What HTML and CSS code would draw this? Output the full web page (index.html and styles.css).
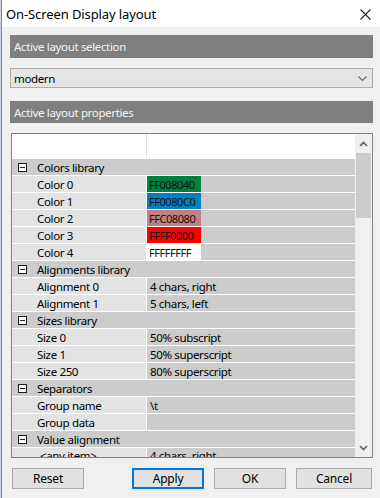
FILE: index.html
```html
<!DOCTYPE html>
<html>
<head>
<meta charset="utf-8">
<link rel="stylesheet" href="styles.css">
</head>
<body>
<div class="window">
  <div class="titlebar">
    <span class="title">On-Screen Display layout</span>
    <svg class="close" width="11" height="11" viewBox="0 0 11 11"><path d="M0.5 0.5L10.5 10.5M10.5 0.5L0.5 10.5" stroke="#222" stroke-width="1.1" fill="none"/></svg>
  </div>
  <div class="content">
    <div class="section-header">Active layout selection</div>
    <div class="select">
      <span>modern</span>
      <svg class="chev" width="9" height="5" viewBox="0 0 9 5"><path d="M0.5 0.5L4.5 4.5L8.5 0.5" stroke="#6a6a6a" stroke-width="1.1" fill="none"/></svg>
    </div>
    <div class="section-header props">Active layout properties</div>
    <div class="grid">
      <div class="rows">
        <div class="row head"><div class="name"></div><div class="value"></div></div>
        <div class="row cat"><span class="box"></span><span>Colors library</span></div>
        <div class="row"><div class="name">Color 0</div><div class="value"><span class="swatch" style="background:#008040">FF008040</span></div></div>
        <div class="row"><div class="name">Color 1</div><div class="value"><span class="swatch" style="background:#0080C0">FF0080C0</span></div></div>
        <div class="row"><div class="name">Color 2</div><div class="value"><span class="swatch" style="background:#C08080">FFC08080</span></div></div>
        <div class="row"><div class="name">Color 3</div><div class="value"><span class="swatch" style="background:#FF0000">FFFF0000</span></div></div>
        <div class="row"><div class="name">Color 4</div><div class="value"><span class="swatch" style="background:#FFFFFF">FFFFFFFF</span></div></div>
        <div class="row cat"><span class="box"></span><span>Alignments library</span></div>
        <div class="row"><div class="name">Alignment 0</div><div class="value">4 chars, right</div></div>
        <div class="row"><div class="name">Alignment 1</div><div class="value">5 chars, left</div></div>
        <div class="row cat"><span class="box"></span><span>Sizes library</span></div>
        <div class="row"><div class="name">Size 0</div><div class="value">50% subscript</div></div>
        <div class="row"><div class="name">Size 1</div><div class="value">50% superscript</div></div>
        <div class="row"><div class="name">Size 250</div><div class="value">80% superscript</div></div>
        <div class="row cat"><span class="box"></span><span>Separators</span></div>
        <div class="row"><div class="name">Group name</div><div class="value">\t</div></div>
        <div class="row"><div class="name">Group data</div><div class="value"></div></div>
        <div class="row cat"><span class="box"></span><span>Value alignment</span></div>
        <div class="row last"><div class="name any">&lt;any item&gt;</div><div class="value">4 chars, right</div></div>
      </div>
      <div class="scrollbar">
        <svg class="arrow" width="9" height="6" viewBox="0 0 9 6"><path d="M1 5L4.5 1.5L8 5" stroke="#606060" stroke-width="1.6" fill="none"/></svg>
        <div class="track"><div class="thumb"></div></div>
        <svg class="arrow" width="9" height="6" viewBox="0 0 9 6"><path d="M1 1L4.5 4.5L8 1" stroke="#606060" stroke-width="1.6" fill="none"/></svg>
      </div>
    </div>
    <div class="buttons">
      <button class="btn">Reset</button>
      <div class="spacer"></div>
      <button class="btn default">Apply</button>
      <button class="btn">OK</button>
      <button class="btn cancel">Cancel</button>
    </div>
  </div>
</div>
</body>
</html>
```
FILE: styles.css
```css
* { box-sizing: border-box; }
html, body { margin: 0; padding: 0; }
body {
  width: 380px;
  height: 498px;
  overflow: hidden;
  background: #f0f0f0;
  font-family: "Noto Sans", sans-serif;
  font-size: 11.5px;
  letter-spacing: -0.35px;
  color: #000;
}
.window {
  width: 380px;
  height: 498px;
  border-left: 1px solid #c8d4e3;
  position: relative;
}
.window::before {
  content: "";
  position: absolute;
  left: 0;
  top: 0;
  bottom: 0;
  width: 1px;
  background: #6d8bb0;
}
.titlebar {
  height: 27px;
  background: #ffffff;
  display: flex;
  align-items: center;
  justify-content: space-between;
  padding: 0 9px 0 5px;
}
.title { font-size: 13px; letter-spacing: -0.1px; color: #000; }
.close { margin-top: 1px; }
.content {
  padding: 8px 7px 0 9px;
}
.section-header {
  height: 23px;
  background: #7f7f7f;
  color: #f4f4f4;
  padding-left: 4px;
  display: flex;
  align-items: center;
}
.section-header.props { margin-top: 13px; height: 22px; }
.select {
  margin-top: 10px;
  height: 20px;
  background: #e5e5e5;
  border: 1px solid #adadad;
  display: flex;
  align-items: center;
  justify-content: space-between;
  padding: 0 5px 0 3px;
}
.grid {
  margin-top: 10px;
  margin-left: 1px;
  height: 325px;
  border: 1px solid #828282;
  display: flex;
  overflow: hidden;
  background: #ffffff;
}
.rows {
  flex: 1;
  overflow: hidden;
}
.row {
  height: 17px;
  border-bottom: 1px solid #ffffff;
  display: flex;
  align-items: stretch;
  background: #e3e3e3;
}
.row.head { height: 25px; background: #ffffff; }
.row.head .name { border-right: 1px solid #e3e3e3; }
.name {
  width: 135px;
  padding-left: 25px;
  display: flex;
  align-items: center;
  border-right: 1px solid #ffffff;
  white-space: nowrap;
}
.name.any { padding-left: 28px; }
.value {
  flex: 1;
  background: #cccccc;
  display: flex;
  align-items: center;
  padding-left: 3px;
  white-space: nowrap;
}
.row.last .name, .row.last .value { align-items: flex-start; line-height: 15px; }
.row.head .value { background: #ffffff; }
.value:has(.swatch) { padding-left: 0; }
.swatch {
  width: 54px;
  height: 16px;
  display: flex;
  align-items: center;
  padding-left: 2px;
  font-size: 11px;
  letter-spacing: -0.45px;
  color: #111;
  overflow: hidden;
}
.row.cat {
  background: #cccccc;
  align-items: center;
}
.box {
  width: 9px;
  height: 9px;
  border: 1px solid #1e1e1e;
  background: #ffffff;
  margin: 0 10px 0 6px;
  position: relative;
}
.box::after {
  content: "";
  position: absolute;
  left: 1px;
  right: 1px;
  top: 3px;
  height: 1px;
  background: #1e1e1e;
}
.scrollbar {
  width: 17px;
  background: #f0f0f0;
  display: flex;
  flex-direction: column;
  align-items: center;
}
.scrollbar .arrow { margin: 7px 0 6px; flex: none; }
.track { flex: 1; width: 100%; padding: 0 1px; }
.thumb { height: 65px; background: #cdcdcd; }
.buttons {
  margin-top: 10px;
  display: flex;
  gap: 10px;
  padding-left: 2px;
}
.spacer { width: 28px; }
.btn {
  width: 72px;
  height: 21px;
  background: #e1e1e1;
  border: 1px solid #adadad;
  font-family: inherit;
  font-size: 12px;
  letter-spacing: -0.2px;
  color: #000;
  padding: 0;
}
.btn.default { border: 2px solid #0078d7; }
.btn.cancel { width: 76px; }
```
